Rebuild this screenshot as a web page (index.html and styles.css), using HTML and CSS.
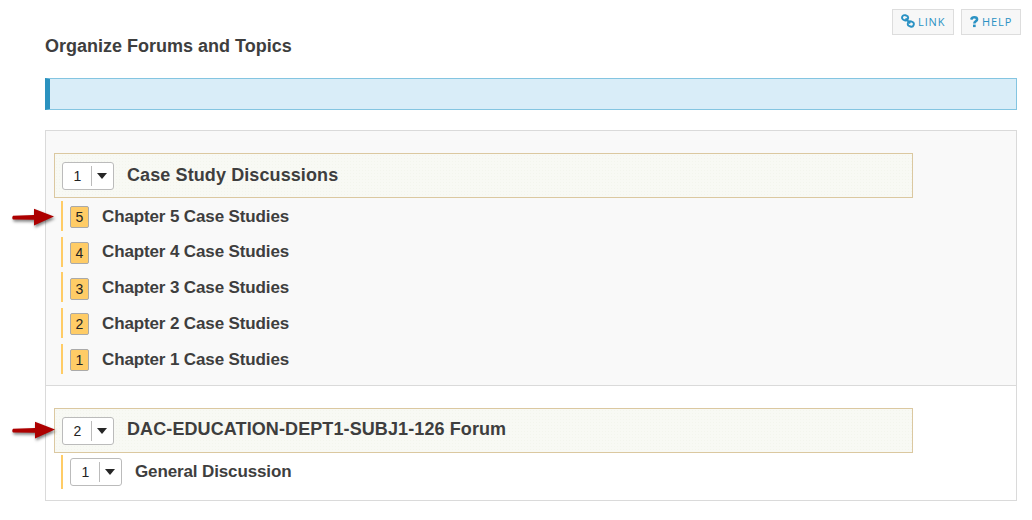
FILE: index.html
```
<!DOCTYPE html>
<html lang="en">
<head>
<meta charset="utf-8">
<title>Organize Forums and Topics</title>
<link rel="stylesheet" href="styles.css">
</head>
<body>
<nav class="tools">
  <a class="tool tool-link">
    <svg class="chain" width="14" height="14" viewBox="0 0 14 14"><g fill="none" stroke="#2b92c4" stroke-width="1.900"><rect x="1" y="1.300" width="6" height="5" rx="2.400" transform="rotate(20 4 4)"/><rect x="6.800" y="7.500" width="6" height="5" rx="2.400" transform="rotate(20 10 10)"/><path d="M4.500 4.500l4.800 4.800"/></g></svg>
    <span>LINK</span>
  </a>
  <a class="tool tool-help">
    <svg class="question" width="9" height="12" viewBox="0 0 9 12"><path d="M1.200 3.600C1.700 1.800 2.800 1.300 4.300 1.300c1.800 0 2.800.8 2.800 2.100 0 1.900-2.800 1.900-2.800 4.100" fill="none" stroke="#2b92c4" stroke-width="2.500"/><path d="M3 8.600h2.700v2.500H3z" fill="#2b92c4"/></svg>
    <span>HELP</span>
  </a>
</nav>
<main class="page">
  <h1>Organize Forums and Topics</h1>
  <div class="notice"></div>
  <div class="panel">
    <section class="forum shaded">
      <header class="forum-head">
        <span class="picker"><span class="num">1</span><span class="drop"></span></span>
        <h2>Case Study Discussions</h2>
      </header>
      <ul class="topics">
        <li><span class="badge">5</span><span class="name">Chapter 5 Case Studies</span></li>
        <li><span class="badge">4</span><span class="name">Chapter 4 Case Studies</span></li>
        <li><span class="badge">3</span><span class="name">Chapter 3 Case Studies</span></li>
        <li><span class="badge">2</span><span class="name">Chapter 2 Case Studies</span></li>
        <li><span class="badge">1</span><span class="name">Chapter 1 Case Studies</span></li>
      </ul>
    </section>
    <section class="forum">
      <header class="forum-head">
        <span class="picker"><span class="num">2</span><span class="drop"></span></span>
        <h2 class="code-title">DAC-EDUCATION-DEPT1-SUBJ1-126 Forum</h2>
      </header>
      <div class="topic-single">
        <span class="picker"><span class="num">1</span><span class="drop"></span></span>
        <span class="name general">General Discussion</span>
      </div>
    </section>
  </div>
</main>
<svg class="arrow arrow-first" width="50" height="28" viewBox="0 0 50 28"><path d="M5 10.800l21-.9V3.800l20 7.800L26 20.500v-5.700l-21-.3q-1.500-1.800 0-3.700z"/></svg>
<svg class="arrow arrow-second" width="50" height="28" viewBox="0 0 50 28"><path d="M5 10.800l22-.9V3.800l20 7.800L27 20.500v-5.700l-22-.3q-1.500-1.800 0-3.700z"/></svg>
</body>
</html>
```
FILE: styles.css
```
* { box-sizing: border-box; }
body {
  margin: 0;
  width: 1032px;
  height: 520px;
  overflow: hidden;
  background: #fff;
  color: #3e3e3e;
  font-family: "Liberation Sans", Arial, sans-serif;
}
.tools {
  display: flex;
  justify-content: flex-end;
  gap: 7px;
  padding: 9px 11px 0 0;
}
.tool {
  display: flex;
  height: 26px;
  border: 1px solid #ddd;
  background: #f7f7f7;
  color: #2b92c4;
  font-family: "Open Sans", "Noto Sans", sans-serif;
  font-size: 11px;
  line-height: 24px;
  letter-spacing: .9px;
}
.tool-link { width: 62px; padding-left: 9px; }
.tool-help { width: 60px; padding-left: 9px; }
.chain { margin: 4px 2px 0 -1px; }
.tool-link span { margin-left: 1px; }
.question { margin: 6px 2px 0 -1px; }
.tool-help span { margin-left: 1px; }
.page { padding: 0 15px 0 45px; }
h1 {
  margin: 0;
  height: 43px;
  padding-top: 1px;
  font-size: 18px;
  line-height: 20px;
  white-space: nowrap;
}
.notice {
  height: 32px;
  border: 1px solid #84c5e1;
  border-left: 5px solid #2b92bf;
  background: #d9edf8;
}
.panel {
  height: 371px;
  margin-top: 20px;
  border: 1px solid #dadada;
}
.forum { padding: 22px 0 0 8px; }
.shaded {
  height: 255px;
  border-bottom: 1px solid #dadada;
  background: #f9f9f9;
}
.forum-head {
  display: flex;
  width: 859px;
  height: 45px;
  padding: 8px 0 0 7px;
  border: 1px solid #dbc8a0;
  background: radial-gradient(circle, #f3f5ed 0 .7px, transparent 1px) 0 0 / 3px 3px #f8f9f4;
}
.picker {
  display: flex;
  flex: none;
  width: 52px;
  height: 28px;
  padding: 3px 0;
  border: 1px solid #bbb;
  border-radius: 3px;
  background: #fff;
}
.num {
  width: 29px;
  padding-left: 1px;
  border-right: 1px solid #bbb;
  color: #222;
  font-size: 14px;
  line-height: 20px;
  text-align: center;
}
.drop {
  width: 10px;
  height: 6px;
  margin: 7px 0 0 5px;
  background: #262626;
  clip-path: polygon(0 0, 100% 0, 50% 100%);
}
h2 {
  margin: 0 0 0 13px;
  font-size: 18px;
  letter-spacing: .1px;
  line-height: 27px;
  white-space: nowrap;
}
.code-title { line-height: 25px; }
.topics {
  display: flex;
  flex-direction: column;
  gap: 5.75px;
  margin: 2.9px 0 0 7px;
  padding: 0;
  list-style: none;
}
.topics li {
  display: flex;
  height: 30px;
  padding: 5.300px 0 0 7px;
  border-left: 2px solid #fc6;
}
.badge {
  width: 19px;
  height: 22px;
  border: 1px solid #aaa;
  border-radius: 2px;
  background: #fc6;
  color: #222;
  font-size: 14px;
  line-height: 21px;
  text-align: center;
}
.name {
  margin: .35px 0 0 13px;
  font-size: 17px;
  font-weight: bold;
  letter-spacing: -.13px;
  line-height: 20px;
  white-space: nowrap;
}
.topic-single {
  display: flex;
  height: 34px;
  margin: 2px 0 0 7px;
  padding: 3px 0 0 7px;
  border-left: 2px solid #fc6;
}
.general { margin-top: 0; line-height: 28px; }
.arrow {
  position: absolute;
  left: 8px;
  overflow: visible;
  fill: #ad0000;
  filter: drop-shadow(1px 2px 1.500px rgba(0, 0, 0, .5));
}
.arrow-first { top: 205px; }
.arrow-second { top: 418px; }
```
